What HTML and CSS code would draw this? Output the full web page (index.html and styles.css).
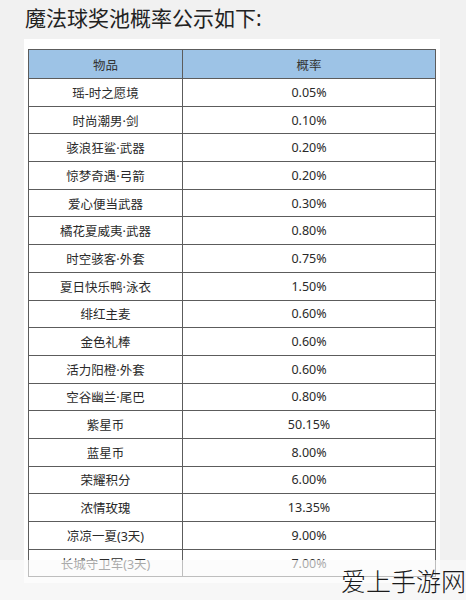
FILE: index.html
```html
<!DOCTYPE html>
<html lang="zh-CN">
<head>
<meta charset="utf-8">
<link rel="stylesheet" href="styles.css">
</head>
<body>
<h1 class="title">魔法球奖池概率公示如下:</h1>
<div class="panel">
  <table class="prob">
    <colgroup><col class="c1"><col class="c2"></colgroup>
    <thead>
      <tr><th>物品</th><th>概率</th></tr>
    </thead>
    <tbody>
      <tr><td>瑶-时之愿境</td><td>0.05%</td></tr>
      <tr><td>时尚潮男·剑</td><td>0.10%</td></tr>
      <tr><td>骇浪狂鲨·武器</td><td>0.20%</td></tr>
      <tr><td>惊梦奇遇·弓箭</td><td>0.20%</td></tr>
      <tr><td>爱心便当武器</td><td>0.30%</td></tr>
      <tr><td>橘花夏威夷·武器</td><td>0.80%</td></tr>
      <tr><td>时空骇客·外套</td><td>0.75%</td></tr>
      <tr><td>夏日快乐鸭·泳衣</td><td>1.50%</td></tr>
      <tr><td>绯红主麦</td><td>0.60%</td></tr>
      <tr><td>金色礼棒</td><td>0.60%</td></tr>
      <tr><td>活力阳橙·外套</td><td>0.60%</td></tr>
      <tr><td>空谷幽兰·尾巴</td><td>0.80%</td></tr>
      <tr><td>紫星币</td><td>50.15%</td></tr>
      <tr><td>蓝星币</td><td>8.00%</td></tr>
      <tr><td>荣耀积分</td><td>6.00%</td></tr>
      <tr><td>浓情玫瑰</td><td>13.35%</td></tr>
      <tr><td>凉凉一夏(3天)</td><td>9.00%</td></tr>
      <tr><td>长城守卫军(3天)</td><td>7.00%</td></tr>
    </tbody>
  </table>
</div>
<div class="fade">
  <span class="mark">爱上手游网</span>
</div>
</body>
</html>
```
FILE: styles.css
```css
html, body {
  margin: 0;
  padding: 0;
}
body {
  background: #f1f1f1;
  width: 466px;
  height: 600px;
  overflow: hidden;
  position: relative;
  font-family: "Noto Sans", "Noto Sans CJK SC", sans-serif;
}
.title {
  margin: 0;
  padding: 3px 0 0 25px;
  height: 36px;
  box-sizing: border-box;
  font-size: 21px;
  line-height: 30px;
  font-weight: 400;
  color: #222;
}
.panel {
  margin-left: 24px;
  width: 416px;
  box-sizing: border-box;
  margin-top: 3px;
  padding: 10px 4px 6px 4px;
  background: #ffffff;
}
.prob {
  width: 408px;
  border-collapse: collapse;
  table-layout: fixed;
  font-size: 12.5px;
  color: #2a2a2a;
}
.c1 { width: 154px; }
.prob th, .prob td {
  border: 1px solid #5c5c5c;
  text-align: center;
  padding: 0;
  font-weight: 400;
}
.prob th {
  background: #9dc3e6;
  height: 28px;
  color: #333;
}
.prob td {
  height: 26.7px;
}
.fade {
  position: absolute;
  left: 0;
  right: 0;
  bottom: 0;
  height: 40px;
  background: rgba(250, 250, 250, 0.62);
}
.mark {
  position: absolute;
  right: 0;
  top: 3px;
  font-family: "Noto Sans CJK SC", sans-serif;
  font-size: 25px;
  line-height: 34px;
  font-weight: 300;
  color: #1a1a1a;
}
```
